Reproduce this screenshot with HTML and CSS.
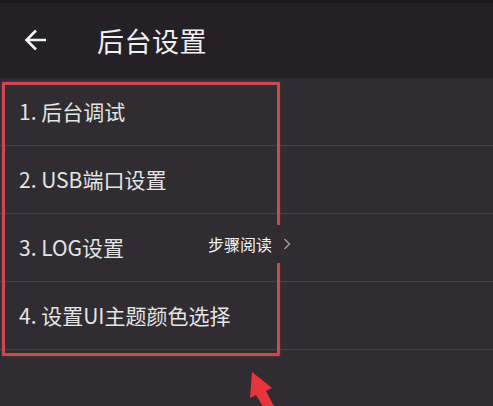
FILE: index.html
```html
<!DOCTYPE html>
<html lang="zh-CN">
<head>
  <meta charset="UTF-8" />
  <meta name="viewport" content="width=device-width, initial-scale=1.0"/>
  <title>后台设置</title>
  <link rel="stylesheet" href="styles.css">
</head>
<body>

  <div class="screen">
    <div class="top-bar">
      <button class="back-btn">
        <svg width="24" height="24" viewBox="0 0 24 24">
          <path d="M22 12H3M12 2.5L2.5 12L12 21.5" fill="none" stroke="#f2f2f2" stroke-width="2.6"/>
        </svg>
      </button>
      <h1>后台设置</h1>
    </div>

    <ul class="menu-list">
      <li>1. 后台调试</li>
      <li>2. USB端口设置</li>
      <li>3. LOG设置</li>
      <li>4. 设置UI主题颜色选择</li>
    </ul>

    <!-- annotation overlays -->
    <div class="mark-box"></div>

    <div class="step-tip">
      <span>步骤阅读</span>
      <svg width="8" height="12" viewBox="0 0 8 12">
        <path d="M1.5 1L6.5 6L1.5 11" fill="none" stroke="#aaa" stroke-width="1.2"/>
      </svg>
    </div>

    <svg class="mark-arrow" width="60" height="56" viewBox="0 0 60 56">
      <polygon points="22,22 42,38 36,41 46,60 35,60 26,45 20,48" fill="#e8353d"/>
    </svg>
  </div>

</body>
</html>
```

FILE: styles.css
```css
* { box-sizing: border-box; margin: 0; padding: 0; }
body {
  font-family: 'Noto Sans CJK SC', 'Noto Sans', sans-serif;
  background: #302d32; color: #e4e4e4;
}
.screen { position: relative; width: 493px; height: 406px; overflow: hidden; }

.top-bar {
  height: 78px; display: flex; align-items: center;
  padding: 0 0 0 24px;
  background: #242126; border-top: 3px solid #1b191c;
}
.back-btn {
  background: none; border: none; display: flex;
  margin-right: 49px; margin-top: -2px;
}
.top-bar h1 {
  font-size: 27px; font-weight: 400; color: #f0f0f0;
  letter-spacing: 0.5px; margin-top: 0;
}

.menu-list { list-style: none; }
.menu-list li {
  height: 68px; display: flex; align-items: center;
  padding-left: 19px; padding-bottom: 2px;
  font-size: 21px; color: #e4e4e4;
  border-bottom: 1px solid #454247;
}

.mark-box {
  position: absolute; left: 2px; top: 82px;
  width: 278px; height: 274px;
  border: 3px solid #cc474f; border-radius: 1px;
  box-shadow: 0 0 2px rgba(200,60,70,0.5);
}
.step-tip {
  position: absolute; left: 190px; top: 225px;
  width: 112px; height: 38px;
  display: flex; align-items: center; gap: 11px;
  padding-left: 18px;
  background: #302d32;
  font-size: 16px; color: #f4f4f4;
}
.mark-arrow { position: absolute; left: 230px; top: 350px; }
```
